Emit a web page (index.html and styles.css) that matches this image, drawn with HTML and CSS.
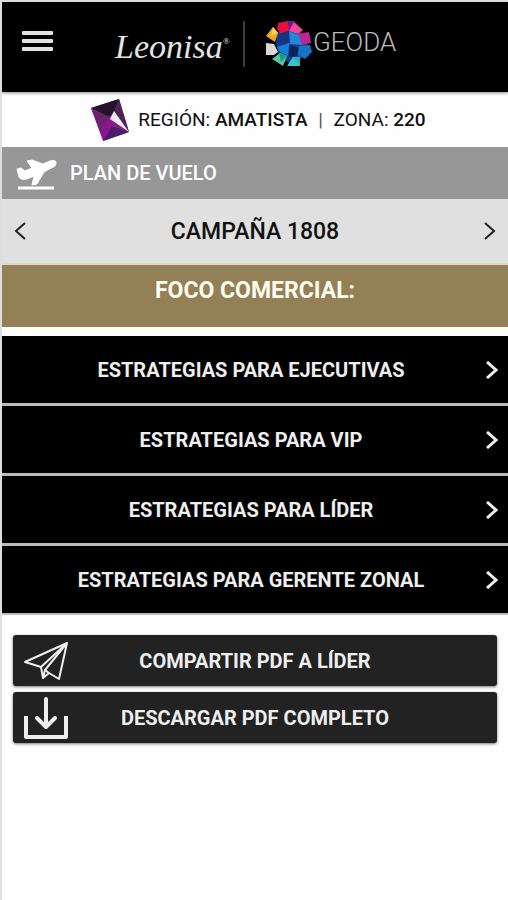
FILE: index.html
```
<!DOCTYPE html>
<html lang="es">
<head>
  <meta charset="UTF-8">
  <title>Geoda - Plan de vuelo</title>
  <meta name="viewport" content="width=device-width, initial-scale=1.0">
  <link rel="stylesheet" href="styles.css">
</head>
<body>
  <header class="topbar">
    <button class="menu-btn" type="button" aria-label="Menú">
      <span></span><span></span><span></span>
    </button>
    <div class="brands">
      <span class="leonisa">Leonisa<sup>®</sup></span>
      <span class="divider"></span>
      <svg class="gem" viewBox="0 0 48 50" aria-hidden="true">
        <path fill="#123f90" d="M12 13l12-4 12 4 7 13-6 13-13 5-10-7-3-12z"/>
        <path fill="#e3123a" d="M13 4l10-2 2 9-9 4-4-5z"/>
        <path fill="#6a1b8a" d="M23 2h7l-2 9-4 3z"/>
        <path fill="#f0479a" d="M29 3l9 8-5 4-9-3z"/>
        <path fill="#c02490" d="M33 15l11-2 2 11-10 2z"/>
        <path fill="#f0a428" d="M8 8l5 6-3 9-9-6z"/>
        <path fill="#ffd24a" d="M8 8l5 6-7 3z"/>
        <path fill="#ddd8d4" d="M1 24l8 1 4 8-4 3H1z"/>
        <path fill="#51c9a5" d="M7 40l8-6 7 3-4 10z"/>
        <path fill="#1e9970" d="M14 34l8 3-6 6z"/>
        <path fill="#35c5cb" d="M22 47l6-9h7v9z"/>
        <path fill="#2bafbb" d="M28 38h7v9z"/>
        <path fill="#1474c4" d="M34 27l11-1 2 7-7 7-7-4z"/>
        <path fill="#2386d8" d="M24 12l10 4 3 10-13-1z"/>
        <path fill="#18337f" d="M13 15l11-3 1 12-12 3z"/>
        <path fill="#1580dc" d="M12 28l12-4-1 13-8-4z"/>
        <path fill="#0c2252" d="M25 26l8 3-1 8-8 1z"/>
      </svg>
      <span class="geoda">GEODA</span>
    </div>
  </header>

  <main>
    <section class="region">
      <svg class="amethyst" viewBox="0 0 40 44" aria-hidden="true">
        <path fill="#8b168c" d="M1 10l28-9 10 33-26 9z"/>
        <path fill="#23142a" d="M1 10l28-9-5 13-5 5z"/>
        <path fill="#6d2270" d="M1 10l18 9-9 14z"/>
        <path fill="#4c1c6a" d="M13 43l9-15 17 6z"/>
        <path fill="#4d2454" d="M29 1l10 33-15-20z"/>
        <path fill="#eee8ef" d="M24 13l15 21-19-13z"/>
      </svg>
      <p>REGIÓN: <b>AMATISTA</b> <span class="pipe">|</span> ZONA: <b>220</b></p>
    </section>

    <div class="plan">
      <svg class="plane" viewBox="0 0 42 34" aria-hidden="true">
        <path fill="#fff" stroke="#fff" stroke-linejoin="round" d="M1 13l4-1 4 3 7-3-5-7 5-1 11 4 7-3c3-1 6-1 6 2 0 3-2 4-5 5l-7 4-7 12-5 1 2-9-7 3c-4 1-7 0-8-2z"/>
        <path stroke="#fff" stroke-width="3" d="M2 32h36"/>
      </svg>
      <h1>PLAN DE VUELO</h1>
    </div>

    <nav class="campaign">
      <button type="button" aria-label="Campaña anterior">
        <svg viewBox="0 0 12 18"><path d="M11 1L2 9l9 8"/></svg>
      </button>
      <h2>CAMPAÑA 1808</h2>
      <button type="button" aria-label="Campaña siguiente">
        <svg viewBox="0 0 12 18"><path d="M1 1l9 8-9 8"/></svg>
      </button>
    </nav>

    <h2 class="focus">FOCO COMERCIAL:</h2>

    <div class="strategies">
      <a href="#ejecutivas"><span>ESTRATEGIAS PARA EJECUTIVAS</span><svg viewBox="0 0 12 18"><path d="M1 1l9 8-9 8"/></svg></a>
      <a href="#vip"><span>ESTRATEGIAS PARA VIP</span><svg viewBox="0 0 12 18"><path d="M1 1l9 8-9 8"/></svg></a>
      <a href="#lider"><span>ESTRATEGIAS PARA LÍDER</span><svg viewBox="0 0 12 18"><path d="M1 1l9 8-9 8"/></svg></a>
      <a href="#gerente"><span>ESTRATEGIAS PARA GERENTE ZONAL</span><svg viewBox="0 0 12 18"><path d="M1 1l9 8-9 8"/></svg></a>
    </div>

    <div class="actions">
      <button type="button">
        <svg viewBox="0 0 46 44" aria-hidden="true">
          <path stroke-width="2" d="M2 23L44 4l-8 36-10-6-6 5-2-11zM44 4L18 28M44 4L22 31l4 3M22 31l-2 8"/>
        </svg>
        <span>COMPARTIR PDF A LÍDER</span>
      </button>
      <button type="button">
        <svg viewBox="0 0 46 44" aria-hidden="true">
          <path stroke-width="4" d="M3 20v21h40V20"/>
          <path stroke-width="4" stroke-linecap="round" d="M23 3v27M14 22l9 9 9-9"/>
        </svg>
        <span>DESCARGAR PDF COMPLETO</span>
      </button>
    </div>
  </main>
</body>
</html>
```
FILE: styles.css
```
* {
  box-sizing: border-box;
}
body {
  font-family: Roboto, "Liberation Sans", sans-serif;
  background-color: #fefefe;
  color: #111;
  margin: 0;
  min-height: 100vh;
  border-top: 2px solid #dcdcdc;
  border-left: 2px solid #dedede;
}
h1, h2, p {
  margin: 0;
}
button {
  font-family: inherit;
  border: 0;
  padding: 0;
  background: none;
  cursor: pointer;
}
svg {
  display: block;
  flex: none;
}
.topbar {
  display: flex;
  align-items: center;
  height: 90px;
  padding: 0 20px 6px;
  background-color: #000;
  box-shadow: 0 1px 3px #888;
}
.menu-btn {
  display: flex;
  flex-direction: column;
  gap: 4px;
  width: 31px;
  margin-bottom: 6px;
}
.menu-btn span {
  height: 4px;
  border-radius: 1px;
  background-color: #e2e2e2;
}
.brands {
  display: flex;
  align-items: center;
  margin-left: 62px;
}
.leonisa {
  width: 112px;
  font-family: "Liberation Serif", serif;
  font-style: italic;
  font-size: 34px;
  line-height: 40px;
  color: #e4e4e4;
}
.leonisa sup {
  font-size: 9px;
  vertical-align: 14px;
}
.divider {
  width: 2px;
  height: 46px;
  margin: 0 20px 0 16px;
  background-color: #3c3c3c;
}
.gem {
  width: 48px;
  height: 50px;
}
.geoda {
  font-size: 26px;
  font-weight: 300;
  line-height: 36px;
  padding-bottom: 4px;
  color: #bbb;
}
.region {
  display: flex;
  align-items: center;
  justify-content: center;
  gap: 8px;
  height: 55px;
  padding-left: 6px;
  font-size: 19px;
}
.amethyst {
  width: 40px;
  height: 44px;
}
.pipe {
  margin: 0 6px;
  color: #555;
}
.region b {
  font-weight: 500;
}
.plan {
  display: flex;
  align-items: center;
  gap: 12px;
  height: 52px;
  padding: 0 14px;
  background-color: #989797;
  color: #fff;
}
.plan h1 {
  font-size: 20px;
  font-weight: 500;
}
.plane {
  width: 42px;
  height: 34px;
}
.campaign {
  display: flex;
  align-items: center;
  justify-content: space-between;
  height: 66px;
  padding: 0 12px;
  background-color: #e0e0e0;
  border-bottom: 2px solid #e0d9c8;
}
.campaign h2 {
  font-size: 23px;
  font-weight: 500;
}
.campaign svg, .strategies svg {
  width: 12px;
  height: 18px;
  fill: none;
  stroke: #222;
  stroke-width: 2;
}
.focus {
  height: 62px;
  padding-top: 10px;
  background-color: #938056;
  color: #fffdf0;
  font-size: 23px;
  line-height: 32px;
  text-align: center;
}
.strategies {
  display: flex;
  flex-direction: column;
  gap: 3px;
  margin-top: 9px;
  background-color: #bbb;
  border-bottom: 2px solid #bbb;
}
.strategies a {
  display: flex;
  align-items: center;
  height: 67px;
  padding: 0 10px;
  background-color: #000;
  color: #eee;
  font-size: 20px;
  font-weight: bold;
  text-decoration: none;
}
.strategies span {
  flex: 1;
  padding-left: 4px;
  text-align: center;
}
.strategies svg {
  stroke: #eee;
  stroke-width: 3;
}
.actions {
  display: flex;
  flex-direction: column;
  gap: 6px;
  padding: 20px 11px;
}
.actions button {
  display: flex;
  align-items: center;
  height: 51px;
  padding: 0 56px 0 10px;
  border-radius: 3px;
  background-color: #222;
  box-shadow: 0 1px 3px #777;
  color: #eee;
  font-size: 20px;
  font-weight: bold;
}
.actions span {
  flex: 1;
  text-align: center;
}
.actions svg {
  width: 46px;
  height: 44px;
  fill: none;
  stroke: #eee;
  stroke-linejoin: round;
}
```
